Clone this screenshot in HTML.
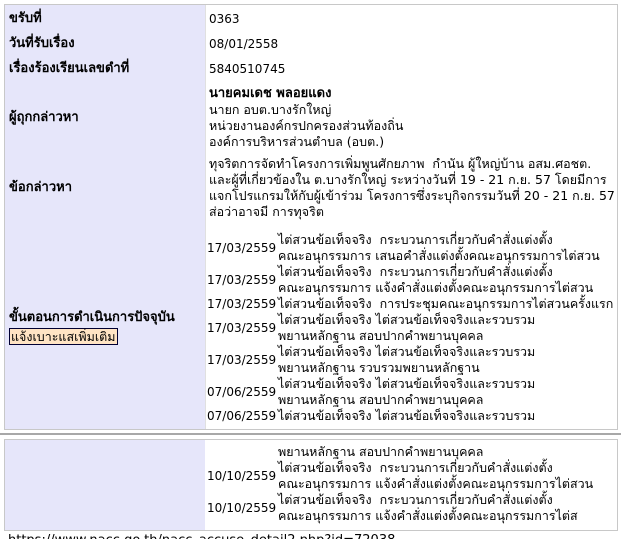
<!DOCTYPE html>
<html><head><meta charset="utf-8"><style>
html,body{margin:0;padding:0;background:#fff;width:621px;height:539px;overflow:hidden}
body{font-family:"Tahoma","DejaVu Sans","Liberation Sans",sans-serif;font-size:12px;color:#000;position:relative}
.box{position:absolute;border:1px solid #c8c8c8;background:#fff}
.lb{position:absolute;background:#e6e6fa}
.t{position:absolute;white-space:nowrap;line-height:16px}
.th{font-size:12.5px}
.b{font-weight:bold;font-size:13px}
.d{position:absolute;left:207px;white-space:nowrap;line-height:16px}
.x{position:absolute;left:278px;white-space:nowrap;line-height:16px;font-size:12.5px}
</style></head><body>
<div class="box" style="left:4px;top:4px;width:612px;height:424px"></div>
<div class="lb" style="left:5px;top:5px;width:200px;height:424px"></div>
<div style="position:absolute;left:205px;top:5px;width:1px;height:424px;background:#e0e0e0"></div>
<div style="position:absolute;left:0;top:433px;width:621px;height:2px;background:#a8a8a8"></div>
<div class="box" style="left:4px;top:439px;width:612px;height:90px"></div>
<div class="lb" style="left:5px;top:440px;width:200px;height:90px"></div>

<div class="t b" style="left:9px;top:11px">ขรับที่</div>
<div class="t" style="left:209px;top:11px">0363</div>
<div class="t b" style="left:9px;top:36px">วันที่รับเรื่อง</div>
<div class="t" style="left:209px;top:36px">08/01/2558</div>
<div class="t b" style="left:9px;top:61px">เรื่องร้องเรียนเลขดำที่</div>
<div class="t" style="left:209px;top:61px">5840510745</div>
<div class="t b" style="left:9px;top:110px">ผู้ถุกกล่าวหา</div>
<div class="t th" style="left:209px;top:85px"><b style="font-size:13px">นายคมเดช พลอยแดง</b><br>นายก อบต.บางรักใหญ่<br>หน่วยงานองค์กรปกครองส่วนท้องถิ่น<br>องค์การบริหารส่วนตำบล (อบต.)</div>
<div class="t b" style="left:9px;top:180px">ข้อกล่าวหา</div>
<div class="t th" style="left:209px;top:156px">ทุจริตการจัดทำโครงการเพิ่มพูนศักยภาพ&nbsp; กำนัน ผู้ใหญ่บ้าน อสม.ศอชต.<br>และผู้ที่เกี่ยวข้องใน ต.บางรักใหญ่ ระหว่างวันที่ 19 - 21 ก.ย. 57 โดยมีการ<br>แจกโปรแกรมให้กับผู้เข้าร่วม โครงการซึ่งระบุกิจกรรมวันที่ 20 - 21 ก.ย. 57<br>ส่อว่าอาจมี การทุจริต</div>
<div class="t b" style="left:9px;top:310px">ขั้นตอนการดำเนินการปัจจุบัน</div>
<div class="t th" style="left:9px;top:328px;background:#ffe4c4;border:1px solid #003;line-height:15px;padding:0 1px">แจ้งเบาะแสเพิ่มเติม</div>

<div class="d" style="top:240px">17/03/2559</div>
<div class="x" style="top:232px">ไต่สวนข้อเท็จจริง&nbsp; กระบวนการเกี่ยวกับคำสั่งแต่งตั้ง<br>คณะอนุกรรมการ เสนอคำสั่งแต่งตั้งคณะอนุกรรมการไต่สวน</div>
<div class="d" style="top:272px">17/03/2559</div>
<div class="x" style="top:264px">ไต่สวนข้อเท็จจริง&nbsp; กระบวนการเกี่ยวกับคำสั่งแต่งตั้ง<br>คณะอนุกรรมการ แจ้งคำสั่งแต่งตั้งคณะอนุกรรมการไต่สวน</div>
<div class="d" style="top:296px">17/03/2559</div>
<div class="x" style="top:296px">ไต่สวนข้อเท็จจริง&nbsp; การประชุมคณะอนุกรรมการไต่สวนครั้งแรก</div>
<div class="d" style="top:320px">17/03/2559</div>
<div class="x" style="top:312px">ไต่สวนข้อเท็จจริง ไต่สวนข้อเท็จจริงและรวบรวม<br>พยานหลักฐาน สอบปากคำพยานบุคคล</div>
<div class="d" style="top:352px">17/03/2559</div>
<div class="x" style="top:344px">ไต่สวนข้อเท็จจริง ไต่สวนข้อเท็จจริงและรวบรวม<br>พยานหลักฐาน รวบรวมพยานหลักฐาน</div>
<div class="d" style="top:384px">07/06/2559</div>
<div class="x" style="top:376px">ไต่สวนข้อเท็จจริง ไต่สวนข้อเท็จจริงและรวบรวม<br>พยานหลักฐาน สอบปากคำพยานบุคคล</div>
<div class="d" style="top:408px">07/06/2559</div>
<div class="x" style="top:408px">ไต่สวนข้อเท็จจริง ไต่สวนข้อเท็จจริงและรวบรวม</div>

<div class="x" style="top:444px">พยานหลักฐาน สอบปากคำพยานบุคคล</div>
<div class="d" style="top:468px">10/10/2559</div>
<div class="x" style="top:460px">ไต่สวนข้อเท็จจริง&nbsp; กระบวนการเกี่ยวกับคำสั่งแต่งตั้ง<br>คณะอนุกรรมการ แจ้งคำสั่งแต่งตั้งคณะอนุกรรมการไต่สวน</div>
<div class="d" style="top:500px">10/10/2559</div>
<div class="x" style="top:492px">ไต่สวนข้อเท็จจริง&nbsp; กระบวนการเกี่ยวกับคำสั่งแต่งตั้ง<br>คณะอนุกรรมการ แจ้งคำสั่งแต่งตั้งคณะอนุกรรมการไต่ส</div>

<div class="t" style="left:8px;top:533px;font-size:13px">https://www.nacc.go.th/nacc_accuse_detail2.php?id=72038</div>
</body></html>
